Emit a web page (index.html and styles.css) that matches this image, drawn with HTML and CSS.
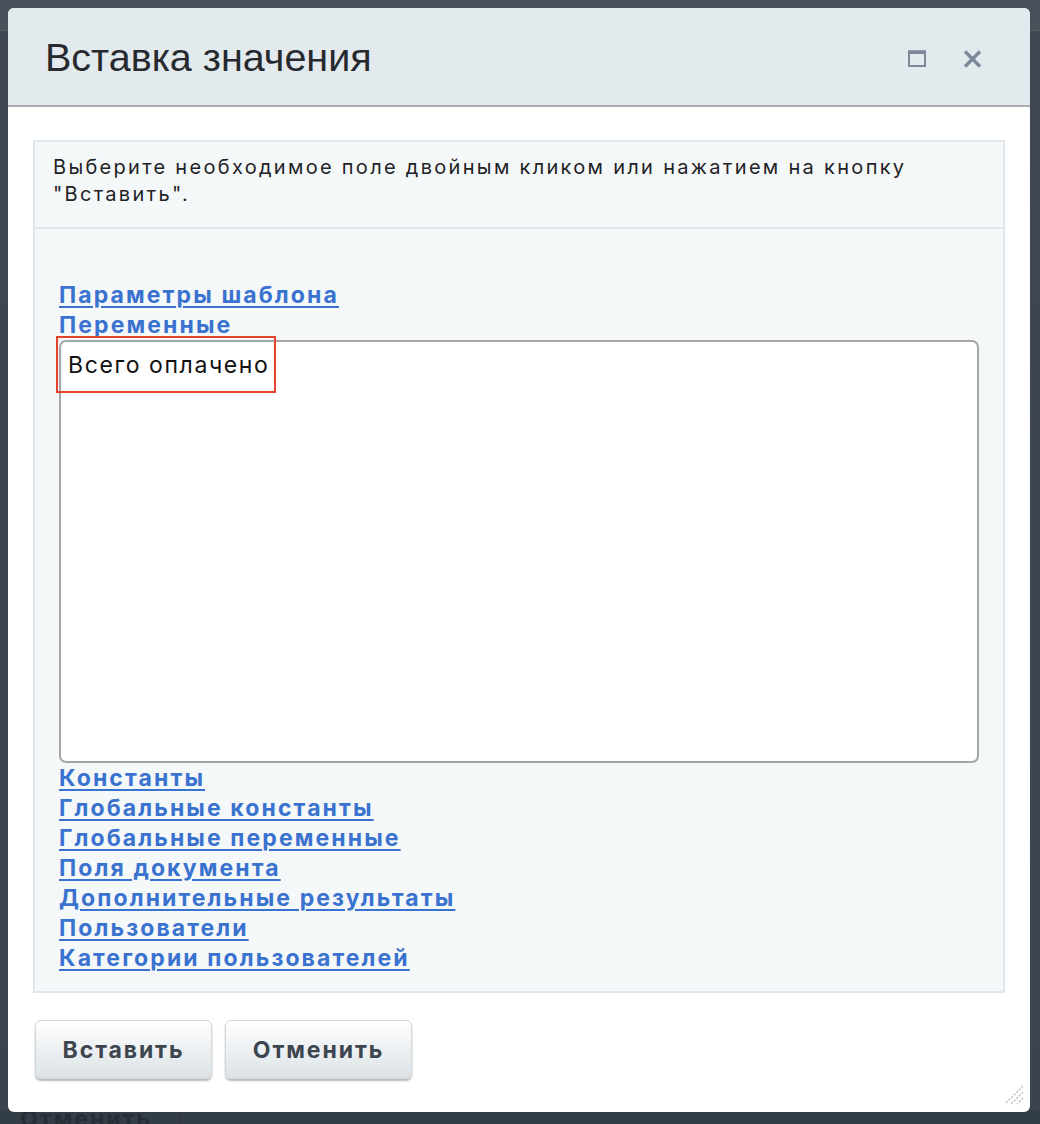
FILE: index.html
```html
<!DOCTYPE html>
<html lang="ru">
<head>
<meta charset="utf-8">
<title>Вставка значения</title>
<link rel="stylesheet" href="styles.css">
</head>
<body>
<div class="page">
  <div class="page-top"></div>
  <div class="page-main"></div>
  <div class="page-bottom"><span class="page-btn">Отменить</span></div>
</div>
<div class="dialog">
  <div class="header">
    <div class="title">Вставка значения</div>
    <div class="tools">
      <svg class="icon" width="18" height="18" viewBox="0 0 18 18"><rect x="1" y="1.5" width="16" height="14.5" fill="none" stroke="#7d8899" stroke-width="2"/><rect x="0" y="0.5" width="18" height="3.5" fill="#7d8899"/></svg>
      <svg class="icon" width="19" height="18" viewBox="0 0 19 18"><path d="M2 1.5 L17 16.5 M17 1.5 L2 16.5" stroke="#7d8899" stroke-width="3.4"/></svg>
    </div>
  </div>
  <div class="content">
    <div class="panel">
      <div class="hint">Выберите необходимое поле двойным кликом или нажатием на кнопку "Вставить".</div>
      <div class="tree">
        <a class="link" href="#">Параметры шаблона</a>
        <a class="link" href="#">Переменные</a>
        <div class="listbox">
          <div class="option">Всего оплачено</div>
          <div class="highlight"></div>
        </div>
        <a class="link" href="#">Константы</a>
        <a class="link" href="#">Глобальные константы</a>
        <a class="link" href="#">Глобальные переменные</a>
        <a class="link" href="#">Поля документа</a>
        <a class="link" href="#">Дополнительные результаты</a>
        <a class="link" href="#">Пользователи</a>
        <a class="link" href="#">Категории пользователей</a>
      </div>
    </div>
    <div class="buttons">
      <button class="btn btn-insert">Вставить</button>
      <button class="btn btn-cancel">Отменить</button>
    </div>
  </div>
  <svg class="resize" width="24" height="24" viewBox="0 0 24 24"><path d="M22 4 L4 22 M22 10 L10 22 M22 16 L16 22" stroke="#c2c6ca" stroke-width="1.6" stroke-dasharray="2.2 1.4"/></svg>
</div>
</body>
</html>
```
FILE: styles.css
```css
html, body {
  margin: 0;
  padding: 0;
}
body {
  width: 1040px;
  height: 1124px;
  overflow: hidden;
  position: relative;
  background: #3d4651;
}
.page {
  display: flex;
  flex-direction: column;
  height: 1124px;
}
.page-top {
  height: 30px;
  background: #4a5059;
  border-bottom: 1px solid #5b6169;
  flex: none;
}
.page-main {
  flex: 1;
  background: linear-gradient(#3f4650, #3b444e);
}
.page-bottom {
  height: 14px;
  background: #333d47;
  flex: none;
  overflow: hidden;
  padding-left: 20px;
}
.page-btn {
  display: block;
  width: 160px;
  border-right: 1px solid #2b343d;
  font-family: "Inter", "Noto Sans", sans-serif;
  font-weight: 700;
  font-size: 23px;
  letter-spacing: 2px;
  color: #252d35;
  line-height: 26px;
  margin-top: -4px;
}
.dialog {
  position: absolute;
  left: 8px;
  top: 8px;
  width: 1022px;
  height: 1104px;
  background: #fff;
  border-radius: 6px;
  overflow: hidden;
  display: flex;
  flex-direction: column;
}
.header {
  height: 97px;
  background: #e3eaed;
  border-bottom: 2px solid #a9adb1;
  display: flex;
  align-items: center;
  justify-content: space-between;
  padding: 0 48px 0 37px;
  flex: none;
}
.title {
  font-family: "Liberation Sans", Arial, sans-serif;
  font-size: 39.5px;
  color: #26292d;
  padding-top: 2px;
}
.tools {
  display: flex;
  gap: 37px;
  align-items: center;
  padding-top: 4px;
}
.icon {
  display: block;
}
.content {
  padding: 33px 25px 0 25px;
}
.panel {
  border: 2px solid #dfe7ed;
  background: #f5f8f9;
}
.hint {
  font-family: "Inter", "Noto Sans", sans-serif;
  font-size: 20px;
  line-height: 27px;
  letter-spacing: 2.3px;
  color: #1f2326;
  padding: 12px 18px 19px 18px;
  border-bottom: 2px solid #dfe7ed;
}
.tree {
  padding: 51px 24px 18px 24px;
  display: flex;
  flex-direction: column;
  align-items: flex-start;
}
.link {
  font-family: "Inter", "Noto Sans", sans-serif;
  font-weight: 700;
  font-size: 23px;
  line-height: 30px;
  letter-spacing: 2.1px;
  color: #3a72cf;
  text-decoration: underline;
  text-underline-offset: 3px;
  text-decoration-thickness: 2px;
}
.listbox {
  position: relative;
  width: 916px;
  height: 419px;
  border: 2px solid #a6a6a6;
  border-radius: 7px;
  background: #fff;
}
.option {
  font-family: "Inter", "Noto Sans", sans-serif;
  font-size: 23px;
  letter-spacing: 1.6px;
  color: #111;
  padding: 9px 0 0 7px;
  line-height: 28px;
}
.highlight {
  position: absolute;
  left: -5px;
  top: -6px;
  width: 216px;
  height: 53px;
  border: 2px solid #e3432f;
}
.buttons {
  display: flex;
  gap: 13px;
  padding: 27px 0 0 2px;
}
.btn {
  font-family: "Inter", "Noto Sans", sans-serif;
  font-weight: 700;
  font-size: 23px;
  letter-spacing: 1.9px;
  color: #3d454e;
  height: 59px;
  border: 1px solid #d3d8dc;
  border-radius: 6px;
  background: linear-gradient(#ffffff, #dbe2e6);
  box-shadow: 0 2px 2px rgba(0,0,0,0.28);
  padding: 0;
}
.btn-insert {
  width: 177px;
}
.btn-cancel {
  width: 187px;
}
.resize {
  position: absolute;
  right: 5px;
  bottom: 6px;
}
```
